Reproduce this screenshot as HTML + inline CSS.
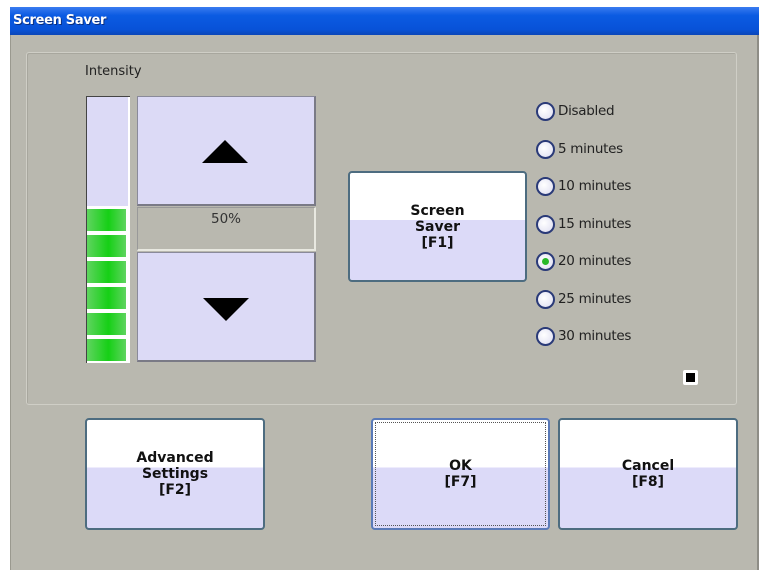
<!DOCTYPE html>
<html><head><style>
*{margin:0;padding:0;box-sizing:border-box}
body{width:768px;height:578px;background:#fff;position:relative;overflow:hidden;font-family:"DejaVu Sans","Liberation Sans",sans-serif}
.a{position:absolute}
#win{left:10px;top:7px;width:749px;height:563px;background:#b9b8af;border-right:2px solid #8e8d86;border-left:1px solid #9a998f}
#title{left:10px;top:7px;width:749px;height:28px;background:linear-gradient(180deg,#3a7cf0 0%,#0b5be2 30%,#0852d8 80%,#0a46b8 100%);color:#fff;font-weight:bold;font-size:13px;line-height:28px;padding-left:3px;letter-spacing:-0.3px;text-shadow:1px 1px 0 #0a2f80}
#grp{left:26px;top:52px;width:711px;height:353px;border:1px solid #cfcec6;border-radius:3px;box-shadow:inset 1px 1px 0 #a8a79e}
.lab{font-size:13px;color:#222}
.pbtn{background:#dcdaf6;border:1px solid #8a8a9a;border-right:2px solid #7a7a86;border-bottom:2px solid #7a7a86}
.btn{border:2px solid #4d6c80;border-radius:4px;background:linear-gradient(180deg,#fff 0%,#fff 44%,#dcdaf8 44%,#dcdaf8 100%);font-weight:bold;font-size:14px;text-align:center;color:#111;display:flex;align-items:center;justify-content:center;line-height:16px}
.seg{position:absolute;left:2px;width:39px;height:22px;background:linear-gradient(90deg,#5fd45f,#16d016 55%,#5fd45f)}
.rad{position:absolute;left:536px;width:19px;height:19px;border-radius:50%;border:2px solid #2a3a78;background:radial-gradient(circle at 40% 40%,#fff,#dcdcf0)}
.rt{position:absolute;left:558px;font-size:13.5px;color:#222;letter-spacing:-0.3px}
</style></head><body>
<div class="a" id="win"></div>
<div class="a" id="title">Screen Saver</div>
<div class="a" id="grp"></div>
<div class="a lab" style="left:85px;top:64px">Intensity</div>
<div class="a" style="left:86px;top:96px;width:44px;height:267px;background:#fff;border-left:1px solid #444;border-top:1px solid #444">
 <div class="a" style="left:0;top:0;width:41px;height:109px;background:#dcdaf6"></div>
 <div class="seg" style="top:112px;left:0"></div>
 <div class="seg" style="top:138px;left:0"></div>
 <div class="seg" style="top:164px;left:0"></div>
 <div class="seg" style="top:190px;left:0"></div>
 <div class="seg" style="top:216px;left:0"></div>
 <div class="seg" style="top:242px;left:0"></div>
</div>
<div class="a pbtn" style="left:137px;top:96px;width:179px;height:110px"><svg class="a" style="left:63px;top:43px" width="48" height="24"><polygon points="24,0 47,23 1,23" fill="#000"/></svg></div>
<div class="a" style="left:137px;top:207px;width:179px;height:44px;border:1px solid #999;border-right:2px solid #e8e8e0;border-bottom:2px solid #e8e8e0;font-size:13.5px;color:#333;text-align:center;padding-top:3px">50%</div>
<div class="a pbtn" style="left:137px;top:252px;width:179px;height:110px"><svg class="a" style="left:64px;top:45px" width="48" height="24"><polygon points="1,0 47,0 24,23" fill="#000"/></svg></div>
<div class="a btn" style="left:348px;top:171px;width:179px;height:111px">Screen<br>Saver<br>[F1]</div>
<div class="rad" style="top:102px"></div><div class="rt" style="top:103px">Disabled</div>
<div class="rad" style="top:140px"></div><div class="rt" style="top:141px">5 minutes</div>
<div class="rad" style="top:177px"></div><div class="rt" style="top:178px">10 minutes</div>
<div class="rad" style="top:215px"></div><div class="rt" style="top:216px">15 minutes</div>
<div class="rad" style="top:252px"><div class="a" style="left:4px;top:4px;width:7px;height:7px;border-radius:50%;background:#28b828"></div></div><div class="rt" style="top:253px">20 minutes</div>
<div class="rad" style="top:290px"></div><div class="rt" style="top:291px">25 minutes</div>
<div class="rad" style="top:327px"></div><div class="rt" style="top:328px">30 minutes</div>
<div class="a" style="left:683px;top:370px;width:15px;height:15px;background:#fff;border-radius:2px"><div class="a" style="left:3px;top:3px;width:9px;height:9px;background:#000"></div></div>
<div class="a btn" style="left:85px;top:418px;width:180px;height:112px">Advanced<br>Settings<br>[F2]</div>
<div class="a btn" style="left:371px;top:418px;width:179px;height:112px;border-color:#5a7ab8"><div class="a" style="left:2px;top:2px;right:2px;bottom:2px;border:1px dotted #555"></div>OK<br>[F7]</div>
<div class="a btn" style="left:558px;top:418px;width:180px;height:112px">Cancel<br>[F8]</div>
</body></html>
